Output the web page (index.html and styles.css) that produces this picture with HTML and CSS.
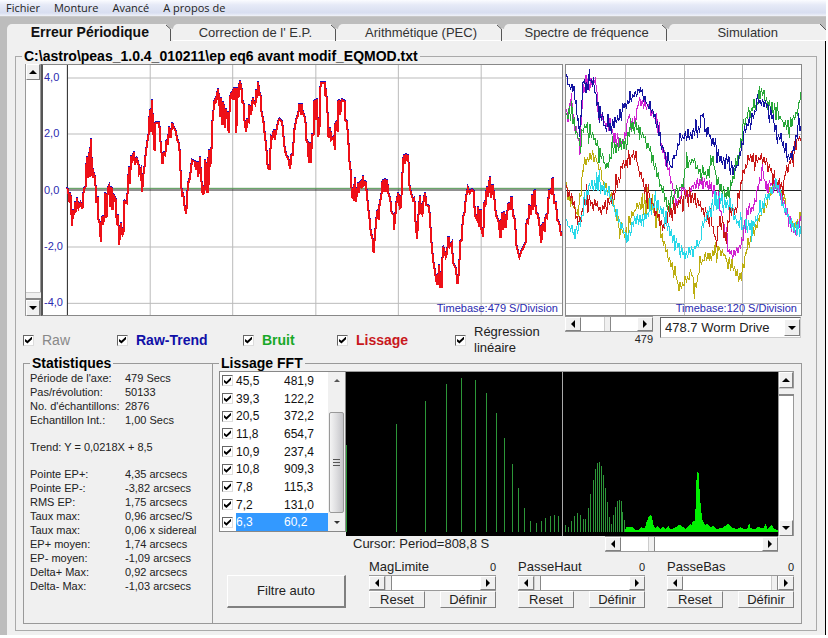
FILE: index.html
```html
<!DOCTYPE html>
<html lang="fr">
<head>
<meta charset="utf-8">
<title>Erreur Périodique</title>
<link rel="stylesheet" href="styles.css">
</head>
<body>
<nav class="menubar">
  <button type="button">Fichier</button>
  <button type="button">Monture</button>
  <button type="button">Avancé</button>
  <button type="button">A propos de</button>
</nav>
<main class="window">
  <div class="tabs" role="tablist">
    <button type="button" role="tab" class="tab active" aria-selected="true">Erreur Périodique<svg viewBox="0 0 8 17"><path class="corner" d="M1 0H8V5L5 4Z"/><path class="edge" d="M1 1L5.500 5V17"/></svg></button>
    <button type="button" role="tab" class="tab">Correction de l' E.P.<svg viewBox="0 0 8 17"><path class="corner" d="M1 0H8V5L5 4Z"/><path class="edge" d="M1 1L5.500 5V17"/></svg></button>
    <button type="button" role="tab" class="tab">Arithmétique (PEC)<svg viewBox="0 0 8 17"><path class="corner" d="M1 0H8V5L5 4Z"/><path class="edge" d="M1 1L5.500 5V17"/></svg></button>
    <button type="button" role="tab" class="tab">Spectre de fréquence<svg viewBox="0 0 8 17"><path class="corner" d="M1 0H8V5L5 4Z"/><path class="edge" d="M1 1L5.500 5V17"/></svg></button>
    <button type="button" role="tab" class="tab last">Simulation<svg viewBox="0 0 8 17"><path class="corner" d="M2 0H8V6Z"/><path class="edge" d="M2 0L8 6"/></svg></button>
  </div>
  <section class="panel">
    <fieldset class="group file">
      <legend>C:\astro\peas_1.0.4_010211\ep eq6 avant modif_EQMOD.txt</legend>

      <div class="top">
        <div class="column">
          <div class="graph-row">
            <div class="scroll vertical">
              <button type="button" class="arrow up" aria-label="Haut"></button>
              <input type="range" aria-label="Echelle" value="100">
              <button type="button" class="arrow down" aria-label="Bas"></button>
            </div>
            <div class="graph main-graph">
              <svg viewBox="132 15 1554 750" preserveAspectRatio="none">
                <path class="grid" d="M205 54H1686M205 222H1686M205 561H1686M205 730H1686M453 15V765M700 15V765M949 15V765M1196 15V765M1444 15V765"/>
                <path class="noise-line" d="M205 385H1686"/>
                <path class="axis" d="M205 15V765M205 390H1686"/>
                <polyline id="trend" class="trend"/>
                <polyline id="smooth" class="smooth"/>
              </svg>
              <div class="scale"><span>4,0</span><span>2,0</span><span>0,0</span><span>-2,0</span><span>-4,0</span></div>
              <span class="timebase">Timebase:479 S/Division</span>
            </div>
          </div>
          <div class="options">
            <label class="raw"><input type="checkbox" checked>Raw</label>
            <label class="rawtrend"><input type="checkbox" checked>Raw-Trend</label>
            <label class="bruit"><input type="checkbox" checked>Bruit</label>
            <label class="lissage"><input type="checkbox" checked>Lissage</label>
            <label class="regression"><input type="checkbox" checked>Régression<br>linéaire</label>
          </div>
        </div>

        <div class="column">
          <div class="graph">
            <svg id="cycles" viewBox="18 15 705 750" preserveAspectRatio="none">
              <path class="grid" d="M18 54H726M18 222H726M18 561H726M18 730H726M197 15V765M373 15V765M548 15V765"/>
              <path class="axis" d="M18 390H726"/>
            </svg>
            <span class="timebase">Timebase:120 S/Division</span>
          </div>
          <div class="cycle-controls">
            <div class="cycle-scroll">
              <div class="scroll">
                <button type="button" class="arrow left" aria-label="Gauche"></button>
                <input type="range" aria-label="Période" value="46">
                <button type="button" class="arrow right" aria-label="Droite"></button>
              </div>
              <output>479</output>
            </div>
            <div class="combo">
              <select aria-label="Période de l'axe"><option>478.7 Worm Drive</option></select>
              <span class="arrow down"></span>
            </div>
          </div>
        </div>
      </div>

      <div class="bottom">
        <fieldset class="group stats">
          <legend>Statistiques</legend>
          <table>
            <tr><th>Période de l'axe:</th><td>479 Secs</td></tr>
            <tr><th>Pas/révolution:</th><td>50133</td></tr>
            <tr><th>No. d'échantillons:</th><td>2876</td></tr>
            <tr><th>Echantillon Int.:</th><td>1,00 Secs</td></tr>
          </table>
          <p>Trend: Y = 0,0218X + 8,5</p>
          <table>
            <tr><th>Pointe EP+:</th><td>4,35 arcsecs</td></tr>
            <tr><th>Pointe EP-:</th><td>-3,82 arcsecs</td></tr>
            <tr><th>RMS EP:</th><td>1,75 arcsecs</td></tr>
            <tr><th>Taux max:</th><td>0,96 arcsec/S</td></tr>
            <tr><th>Taux max:</th><td>0,06 x sidereal</td></tr>
            <tr><th>EP+ moyen:</th><td>1,74 arcsecs</td></tr>
            <tr><th>EP- moyen:</th><td>-1,09 arcsecs</td></tr>
            <tr><th>Delta+ Max:</th><td>0,92 arcsecs</td></tr>
            <tr><th>Delta- Max:</th><td>-1,03 arcsecs</td></tr>
          </table>
        </fieldset>

        <fieldset class="group fft">
          <legend>Lissage FFT</legend>
          <div class="fft-body">
            <div class="fft-left">
              <div class="listbox">
                <div class="rows">
                  <label><input type="checkbox" checked><span class="cells"><span>45,5</span><span>481,9</span></span></label>
                  <label><input type="checkbox" checked><span class="cells"><span>39,3</span><span>122,2</span></span></label>
                  <label><input type="checkbox" checked><span class="cells"><span>20,5</span><span>372,2</span></span></label>
                  <label><input type="checkbox" checked><span class="cells"><span>11,8</span><span>654,7</span></span></label>
                  <label><input type="checkbox" checked><span class="cells"><span>10,9</span><span>237,4</span></span></label>
                  <label><input type="checkbox" checked><span class="cells"><span>10,8</span><span>909,3</span></span></label>
                  <label><input type="checkbox" checked><span class="cells"><span>7,8</span><span>115,3</span></span></label>
                  <label><input type="checkbox" checked><span class="cells"><span>7,2</span><span>131,0</span></span></label>
                  <label class="selected"><input type="checkbox" checked><span class="cells"><span>6,3</span><span>60,2</span></span></label>
                </div>
                <div class="list-scroll">
                  <span class="tick up"></span>
                  <span class="grip"><i></i><i></i><i></i></span>
                  <span class="tick down"></span>
                </div>
              </div>
              <button type="button" class="push auto">Filtre auto</button>
            </div>
            <div class="fft-right">
              <div class="spectrum-row">
                <svg id="spectrum" viewBox="18 21 1296 492" preserveAspectRatio="none">
                  <path class="fill" d="M855 500L858 485 865 487 872 485 878 487 885 495 895 495 905 487 915 490 920 470 926 455 931 450 936 455 940 480 945 490 952 482 960 492 968 485 975 492 985 483 990 492 1002 490 1010 485 1020 478 1028 485 1035 492 1045 485 1052 478 1056 480 1058 468 1064 468 1067 425 1069 350 1073 318 1077 328 1079 385 1083 430 1087 465 1095 480 1102 475 1110 485 1120 484 1130 492 1150 487 1165 475 1175 488 1190 492 1200 487 1215 492 1223 490 1227 472 1232 490 1245 492 1252 486 1270 490 1277 475 1282 492 1290 485 1296 480 1302 490 1313 496V500Z"/>
                  <path id="bars" class="bars"/>
                  <path class="cursor" d="M667 21V513"/>
                </svg>
                <div class="scroll vertical">
                  <button type="button" class="arrow up" aria-label="Haut"></button>
                  <input type="range" aria-label="Amplitude" value="0">
                  <button type="button" class="arrow down" aria-label="Bas"></button>
                </div>
              </div>
              <div class="cursor-row">
                <span>Cursor: Period=808,8 S</span>
                <div class="scroll">
                  <button type="button" class="arrow left" aria-label="Gauche"></button>
                  <input type="range" aria-label="Zoom" value="20">
                  <button type="button" class="arrow right" aria-label="Droite"></button>
                </div>
              </div>
              <div class="filters">
                <div class="filter">
                  <div class="caption"><label for="mag">MagLimite</label><output>0</output></div>
                  <div class="scroll">
                    <button type="button" class="arrow left" aria-label="Moins"></button>
                    <input type="range" id="mag" value="0">
                    <button type="button" class="arrow right" aria-label="Plus"></button>
                  </div>
                  <div class="actions"><button type="button" class="push">Reset</button><button type="button" class="push">Définir</button></div>
                </div>
                <div class="filter">
                  <div class="caption"><label for="haut">PasseHaut</label><output>0</output></div>
                  <div class="scroll">
                    <button type="button" class="arrow left" aria-label="Moins"></button>
                    <input type="range" id="haut" value="0">
                    <button type="button" class="arrow right" aria-label="Plus"></button>
                  </div>
                  <div class="actions"><button type="button" class="push">Reset</button><button type="button" class="push">Définir</button></div>
                </div>
                <div class="filter">
                  <div class="caption"><label for="bas">PasseBas</label><output>0</output></div>
                  <div class="scroll">
                    <button type="button" class="arrow left" aria-label="Moins"></button>
                    <input type="range" id="bas" value="100">
                    <button type="button" class="arrow right" aria-label="Plus"></button>
                  </div>
                  <div class="actions"><button type="button" class="push">Reset</button><button type="button" class="push">Définir</button></div>
                </div>
              </div>
            </div>
          </div>
        </fieldset>
      </div>
    </fieldset>
  </section>
</main>
<script src="charts.js"></script>
</body>
</html>
```
FILE: styles.css
```css
* { box-sizing: border-box; }
body {
  margin: 0;
  background: #fff;
  color: #222;
  font: 13px/16px "Liberation Sans", Arial, sans-serif;
}
button, input, select { font: inherit; color: inherit; margin: 0; padding: 0; }
button { border: 0; background: none; }
svg { display: block; }

/* menu */
.menubar {
  display: flex;
  gap: 14px;
  height: 17px;
  margin-right: 2px;
  padding: 0 6px;
  background: linear-gradient(#fbfcff, #e6eaf7 30%, #d8def0 80%, #f0f2f8);
  border-bottom: 1px solid #c8c8c8;
}
.menubar button { font: 11px/14px "Open Sans", "Noto Sans", sans-serif; color: #222; }

/* tabs */
.window { background: #bdbdbd; padding: 7px 0 0 7px; margin-right: 2px; }
.tabs { display: flex; height: 17px; }
.tab {
  position: relative;
  flex: 165;
  background: #f0f0f0;
  border-radius: 5px 0 0 0;
  border-bottom: 1px solid #fff;
  line-height: 17px;
  color: #333;
}
.tab.active { font-weight: bold; font-size: 14px; color: #111; border-bottom-color: #f0f0f0; }
.tab.last { flex: 156; }
.tab svg { position: absolute; top: 0; right: 0; width: 8px; height: 17px; }
.corner { fill: #bdbdbd; }
.edge { fill: none; stroke: #555; stroke-width: 1; }
.panel {
  padding: 7px 8px 4px 8px;
  background: #f0f0f0;
  border-right: 1px solid #000;
}

/* group boxes */
.group { min-width: 0; margin: 0; border: 1px solid #999; }
.group > legend { height: 16px; padding: 0 2px; font-size: 14px; line-height: 16px; font-weight: bold; color: #000; }
.file { padding: 0 14px 6px 7px; border-color: #aaa; }
.file > legend { margin-left: -1px; }
.top { display: grid; grid-template-columns: 540fr 237fr; gap: 2px; }
.column { min-width: 0; }
.bottom { display: grid; grid-template-columns: 190fr 589fr; }

/* graphs */
.graph-row { display: flex; padding-left: 2px; }
.graph-row .scroll { width: 17px; }
.graph {
  position: relative;
  height: 252px;
  background: #fff;
  border: 1px solid #888;
}
.main-graph { flex: 1; border-left: 2px solid #555; }
.graph svg { width: 100%; height: 100%; shape-rendering: crispEdges; }
.graph path, .graph polyline { fill: none; vector-effect: non-scaling-stroke; }
.grid { stroke: #bbb; stroke-width: 1; }
.axis { stroke: #222; stroke-width: 1; }
.noise-line { stroke: #4d944d; stroke-width: 1; }
.graph .trend { stroke: #1c10c0; stroke-width: 2; }
.graph .smooth { stroke: #ee1018; stroke-width: 2; }
.scale {
  position: absolute;
  inset: 5px auto 6px 1px;
  display: flex;
  flex-direction: column;
  justify-content: space-between;
  font-size: 11px;
  line-height: 14px;
  color: #2a2ab0;
}
.timebase {
  position: absolute;
  right: 4px;
  bottom: 0;
  font-size: 11px;
  line-height: 14px;
  color: #2a2ab0;
}
.graph .cycle { stroke-width: 1; }
.navy { stroke: #1414a0; }
.magenta { stroke: #d020d0; }
.green { stroke: #28a838; }
.red { stroke: #c81818; }
.cyan { stroke: #28d8e8; }
.olive { stroke: #bcae10; }

/* scroll bars */
.scroll { display: flex; height: 16px; min-width: 0; background: #fff; border-top: 1px solid #999; border-bottom: 1px solid #999; }
.scroll input {
  appearance: none;
  flex: 1;
  width: 0;
  min-width: 0;
  height: 100%;
  background: #fff;
}
.scroll input::-webkit-slider-thumb {
  appearance: none;
  width: 7px;
  height: 14px;
  background: #f0f0f0;
  border-right: 1px solid #888;
  border-left: 1px solid #ccc;
}
.scroll.vertical { flex-direction: column; width: 16px; height: auto; border: 0; border-left: 1px solid #999; border-right: 1px solid #999; }
.scroll.vertical input { writing-mode: vertical-lr; width: 100%; height: 0; min-height: 0; }
.scroll.vertical input::-webkit-slider-thumb {
  width: 15px;
  height: 8px;
  border: 0;
  border-top: 1px solid #ccc;
  border-bottom: 2px solid #888;
}
.arrow {
  flex: none;
  display: grid;
  place-items: center;
  width: 16px;
  height: 100%;
  background: #f0f0f0;
  border: 1px solid;
  border-color: #fff #808080 #808080 #fff;
}
.vertical .arrow { width: 100%; height: 16px; }
.arrow::before { content: ""; border: 4px solid transparent; }
.arrow.up::before { border-top: 0; border-bottom-color: #000; }
.arrow.down::before { border-bottom: 0; border-top-color: #000; }
.arrow.left::before { border-left: 0; border-right-color: #000; }
.arrow.right::before { border-right: 0; border-left-color: #000; }

/* check boxes */
input[type="checkbox"] {
  appearance: none;
  flex: none;
  display: grid;
  place-items: center;
  width: 11px;
  height: 11px;
  background: #fff;
  border: 1px solid;
  border-color: #666 #ddd #ddd #666;
}
input[type="checkbox"]:checked::before {
  content: "";
  width: 7px;
  height: 7px;
  background: #000;
  clip-path: polygon(0 35%, 35% 62%, 100% 0, 100% 38%, 35% 100%, 0 70%);
}
.options {
  display: grid;
  grid-template-columns: 94fr 126fr 94fr 118fr 108fr;
  align-items: center;
  height: 39px;
  padding-top: 8px;
  font-size: 14px;
  font-weight: bold;
}
.options label { display: flex; align-items: center; gap: 8px; }
.options .raw { font-weight: normal; color: #888; }
.rawtrend { color: #1010a8; }
.bruit { color: #18a828; }
.lissage { color: #c81820; }
.options .regression { font-size: 13px; font-weight: normal; }

.cycle-controls { display: flex; justify-content: space-between; padding-right: 1px; }
.cycle-scroll { width: 88px; text-align: right; }
.cycle-scroll output { display: block; font-size: 11px; line-height: 14px; }
.combo { position: relative; width: 141px; height: 21px; margin-top: 1px; }
.combo select {
  appearance: none;
  width: 100%;
  height: 100%;
  padding-left: 4px;
  background: #fff;
  border: 1px solid;
  border-color: #666 #ccc #ccc #666;
  border-radius: 0;
}
.combo .arrow { position: absolute; top: 2px; right: 1px; height: 17px; pointer-events: none; }

/* statistics */
.stats { padding: 0 6px; font-size: 11px; line-height: 14px; }
.stats table { width: 100%; border-collapse: collapse; table-layout: fixed; }
.stats th { width: 95px; padding: 0; text-align: left; font-weight: normal; white-space: nowrap; }
.stats td { padding: 0; white-space: nowrap; }
.stats p { margin: 13px 0; }

/* FFT */
.fft { margin-left: -1px; padding: 0 7px 15px 6px; }
.fft-body { display: flex; }
.fft-left { display: flex; flex-direction: column; width: 127px; }
.listbox { display: flex; height: 161px; background: #fff; border: 1px solid #888; }
.rows { flex: 1; display: flex; flex-direction: column; font-size: 12px; color: #111; }
.rows label { flex: 1; display: flex; align-items: center; gap: 3px; padding-left: 2px; }
.cells { flex: 1; display: grid; grid-template-columns: 48px 1fr; align-items: center; align-self: stretch; }
.selected .cells { background: #3399ff; color: #fff; }
.list-scroll {
  display: flex;
  flex-direction: column;
  align-items: center;
  width: 17px;
  background: #f0f0f0;
}
.tick { height: 18px; display: grid; place-items: center; }
.tick.up { height: 17px; margin-bottom: 23px; }
.tick::before { content: ""; border: 3px solid transparent; }
.tick.up::before { border-top: 0; border-bottom-color: #555; }
.tick.down::before { border-bottom: 0; border-top-color: #333; }
.grip {
  flex: 1;
  display: flex;
  flex-direction: column;
  align-items: center;
  justify-content: center;
  gap: 2px;
  width: 15px;
  border: 1px solid #999;
  border-radius: 2px;
  background: linear-gradient(90deg, #f4f4f4, #e0e0e2 45%, #c4c4c8);
}
.grip i { width: 7px; height: 1px; background: #555; }
.push {
  background: #f0f0f0;
  border: 1px solid;
  border-color: #fff #808080 #808080 #fff;
  color: #222;
}
.auto { height: 33px; margin: 43px 0 0 8px; border-right-width: 2px; border-bottom-width: 2px; }
.fft-right { flex: 1; min-width: 0; }
.spectrum-row { display: flex; height: 165px; border-top: 1px solid #999; }
#spectrum { flex: 1; min-width: 0; height: 100%; background: #000; shape-rendering: crispEdges; }
#spectrum path { vector-effect: non-scaling-stroke; }
.fill { fill: #00f000; }
.bars { fill: none; stroke: #2c9638; stroke-width: 1; }
.cursor { stroke: #aaa; stroke-width: 1; }
.cursor-row { display: flex; justify-content: space-between; padding: 0 16px 0 7px; }
.cursor-row .scroll { width: 173px; }
.filters { display: grid; grid-template-columns: repeat(3, minmax(0, 1fr)); gap: 22px; padding: 7px 0 0 23px; }
.caption { display: flex; justify-content: space-between; }
.caption output { font-size: 11px; }
.actions { display: flex; justify-content: space-between; }
.actions .push { width: 56px; height: 17px; line-height: 14px; }
```
FILE: charts.js
```js
// Error curve, in plot units
const left = [205,385,208,400,212,430,214,400,219,497,222,450,226,465,228,425,232,455,234,415,238,445,244,430,250,447,254,390,260,380,263,290,266,355,270,280,272,350,275,238,279,340,282,335,283,350,286,345,290,385,292,430,296,410,298,480,302,490,305,545,308,470,312,490,316,478,318,400,322,475,326,385,330,378,334,440,337,380,340,450,345,410,350,420,353,495,357,465,360,555,365,490,370,525,373,520,376,425,383,430,387,375,389,320,392,372,396,288,399,310,404,275,408,315,412,293,418,315,420,340,425,330,429,395,432,350,436,320,440,275,448,225,452,150,454,215,458,120,462,210,466,272,469,188,480,190,484,248,490,312,493,280,498,285,502,240,505,255,510,200,514,235,519,190,524,205,528,210,534,240,540,255,543,320,548,410,552,400,554,430,561,462,564,400,568,365,572,355,578,302,586,305,590,330,594,305,597,350,602,290,605,350,610,402,615,400,618,300,622,400,625,295,627,400,630,270,632,320,636,300,638,185,642,180,643,130,648,120,650,130,656,87,660,125,662,170,665,115,668,195,672,125,676,205,680,148,684,170,688,218,692,120,695,98,700,120,703,85,706,120,710,85,711,218,714,85,717,115,721,65,726,80,728,125,732,125,735,180,740,215,744,180,748,185,750,135,755,165,760,115,764,130,768,135,770,90,774,115,776,66,780,100,784,110,786,155,792,185,796,225,800,255,805,325,812,327,814,230,819,235,823,210,826,240,830,215,836,185];
const right = [0,178,8,185,12,230,16,270,22,290,26,295,32,327,36,285,40,285,44,215,50,180,56,165,60,132,64,165,66,132,70,160,74,165,78,190,80,240,85,250,88,310,92,250,94,308,98,225,102,225,105,120,110,180,112,118,116,232,120,200,121,98,124,70,136,70,137,100,140,95,144,160,147,235,152,205,155,240,162,233,166,270,168,185,174,215,177,120,182,165,186,120,196,125,197,180,202,185,206,240,210,310,214,340,217,415,220,385,222,423,226,355,229,427,233,390,236,370,238,400,241,365,246,385,250,348,253,375,258,368,260,390,263,395,264,440,268,460,274,525,278,530,282,580,286,525,290,480,294,450,297,480,300,430,305,410,309,360,313,395,316,358,318,395,322,360,326,400,332,420,336,460,342,465,343,510,348,455,350,430,356,400,360,445,364,440,368,350,370,300,374,285,376,312,380,285,386,290,388,370,394,400,400,420,404,415,406,470,412,537,417,455,421,408,424,460,428,465,432,420,436,400,440,435,448,440,452,500,456,560,460,600,464,625,470,665,474,675,478,615,482,680,486,680,488,600,490,560,494,575,498,590,502,580,506,530,510,560,516,550,520,610,528,625,533,672,537,640,542,545,546,540,549,475,554,460,558,415,564,385,570,400,575,390,582,395,585,465,592,480,595,440,598,500,602,450,605,510,610,530,614,430,617,435,621,380,625,410,630,350,634,415,638,375,642,400,648,465,656,485,662,535,666,460,669,510,673,455,677,505,682,460,686,430,690,450,695,410,699,465,705,480,710,560,718,592,724,575,732,560,738,545,740,485,745,490,748,435,753,465,757,405,760,450,764,390,768,460,774,465,778,490,784,550,788,490,794,515,797,470,802,475,804,430,808,395,813,400,818,355,822,430,828,430,832,480,838,490,843,528];
const curve = left.concat(right.map((v, i) => i % 2 ? v : v + 840));
document.getElementById('smooth').setAttribute('points', curve.join(' '));
document.getElementById('trend').setAttribute('points', curve.map((v, i) => i % 2 ? v - 3 : v).join(' '));

// Worm cycles: envelope points with sampling noise on top
const cycles = {
  olive: [20,410,40,430,55,460,70,320,90,285,110,300,130,370,155,410,175,490,195,530,215,460,250,420,280,440,295,480,310,540,325,590,345,640,360,690,375,660,395,640,405,690,420,610,450,590,475,560,500,600,520,620,540,660,560,560,575,530,600,470,625,410,650,370,670,420,700,500,726,470],
  magenta: [20,150,34,120,45,200,60,255,70,80,85,55,95,65,108,60,115,140,130,190,150,195,165,235,190,245,205,175,220,200,235,130,265,135,290,190,305,260,320,310,335,370,350,430,370,390,385,400,400,385,425,365,450,375,465,400,480,440,500,540,510,580,530,590,545,540,560,460,580,440,595,390,607,340,620,380,650,370,670,430,690,490,705,520,726,470],
  green: [20,160,35,160,50,220,62,260,70,200,90,205,105,240,120,270,137,320,160,265,180,250,200,250,215,190,240,220,260,240,275,290,295,350,310,410,330,440,350,390,370,370,380,300,400,300,420,345,440,340,455,290,475,370,500,400,515,360,530,320,550,200,570,150,590,130,600,95,620,125,640,150,660,170,680,205,700,170,712,160,726,90],
  red: [20,395,35,410,55,500,70,450,80,410,100,430,120,445,140,440,160,410,175,360,190,310,210,300,220,275,235,325,250,370,265,410,285,450,300,490,310,510,325,460,345,460,365,410,385,405,405,410,425,435,440,470,455,490,470,550,480,480,495,540,510,450,530,440,545,370,560,310,580,295,600,295,620,300,635,330,650,370,665,380,680,330,700,280,715,230,726,240],
  cyan: [20,490,45,530,65,480,80,390,110,370,135,390,155,410,175,480,200,530,220,490,250,480,270,450,290,430,310,450,330,510,345,550,375,590,395,570,415,560,430,500,445,460,470,430,490,420,510,430,530,480,550,500,575,500,600,450,620,420,650,370,670,430,695,500,726,520],
  navy: [20,55,28,90,38,75,48,130,58,210,64,150,70,45,80,85,90,60,100,70,110,130,120,150,140,215,150,190,165,185,180,170,195,135,210,110,230,100,243,80,255,120,270,150,285,165,300,240,320,290,332,320,345,290,360,240,380,225,400,215,415,220,427,165,440,210,455,235,475,285,495,305,515,315,530,320,545,270,560,200,580,165,600,120,620,130,640,175,655,225,670,250,685,300,700,270,712,215,726,190]
};
let seed = 7;
function noise() {
  seed = (seed * 16807) % 2147483647;
  return seed / 2147483647;
}
const plot = document.getElementById('cycles');
for (const [name, p] of Object.entries(cycles)) {
  const points = [];
  let sign = 1;
  for (let i = 0; i + 3 < p.length; i += 2) {
    for (let x = p[i]; x < p[i + 2]; x += 4) {
      const t = (x - p[i]) / (p[i + 2] - p[i]);
      sign = -sign;
      const size = noise() < 0.2 ? 48 : 24;
      points.push(x, Math.round(p[i + 1] + t * (p[i + 3] - p[i + 1]) + sign * noise() * size));
    }
  }
  points.push(p[p.length - 2], p[p.length - 1]);
  const line = document.createElementNS('http://www.w3.org/2000/svg', 'polyline');
  line.setAttribute('class', 'cycle ' + name);
  line.setAttribute('points', points.join(' '));
  plot.append(line);
}

// Spectrum bars: position, top
const bars = [20,240,170,177,256,108,318,57,365,38,406,45,439,85,469,143,493,220,516,297,536,370,554,430,572,468,590,474,604,468,616,460,630,453,642,450,655,453,675,480,686,485,695,468,704,453,712,445,722,450,729,462,736,462,745,430,751,388,760,345,766,312,772,294,778,291,784,304,790,330,796,370,802,412,808,457,814,477,820,450,826,427,831,408,837,405,843,408,848,440,854,465];
let d = '';
for (let i = 0; i < bars.length; i += 2) d += `M${bars[i]} ${bars[i + 1]}V500`;
document.getElementById('bars').setAttribute('d', d);
```
